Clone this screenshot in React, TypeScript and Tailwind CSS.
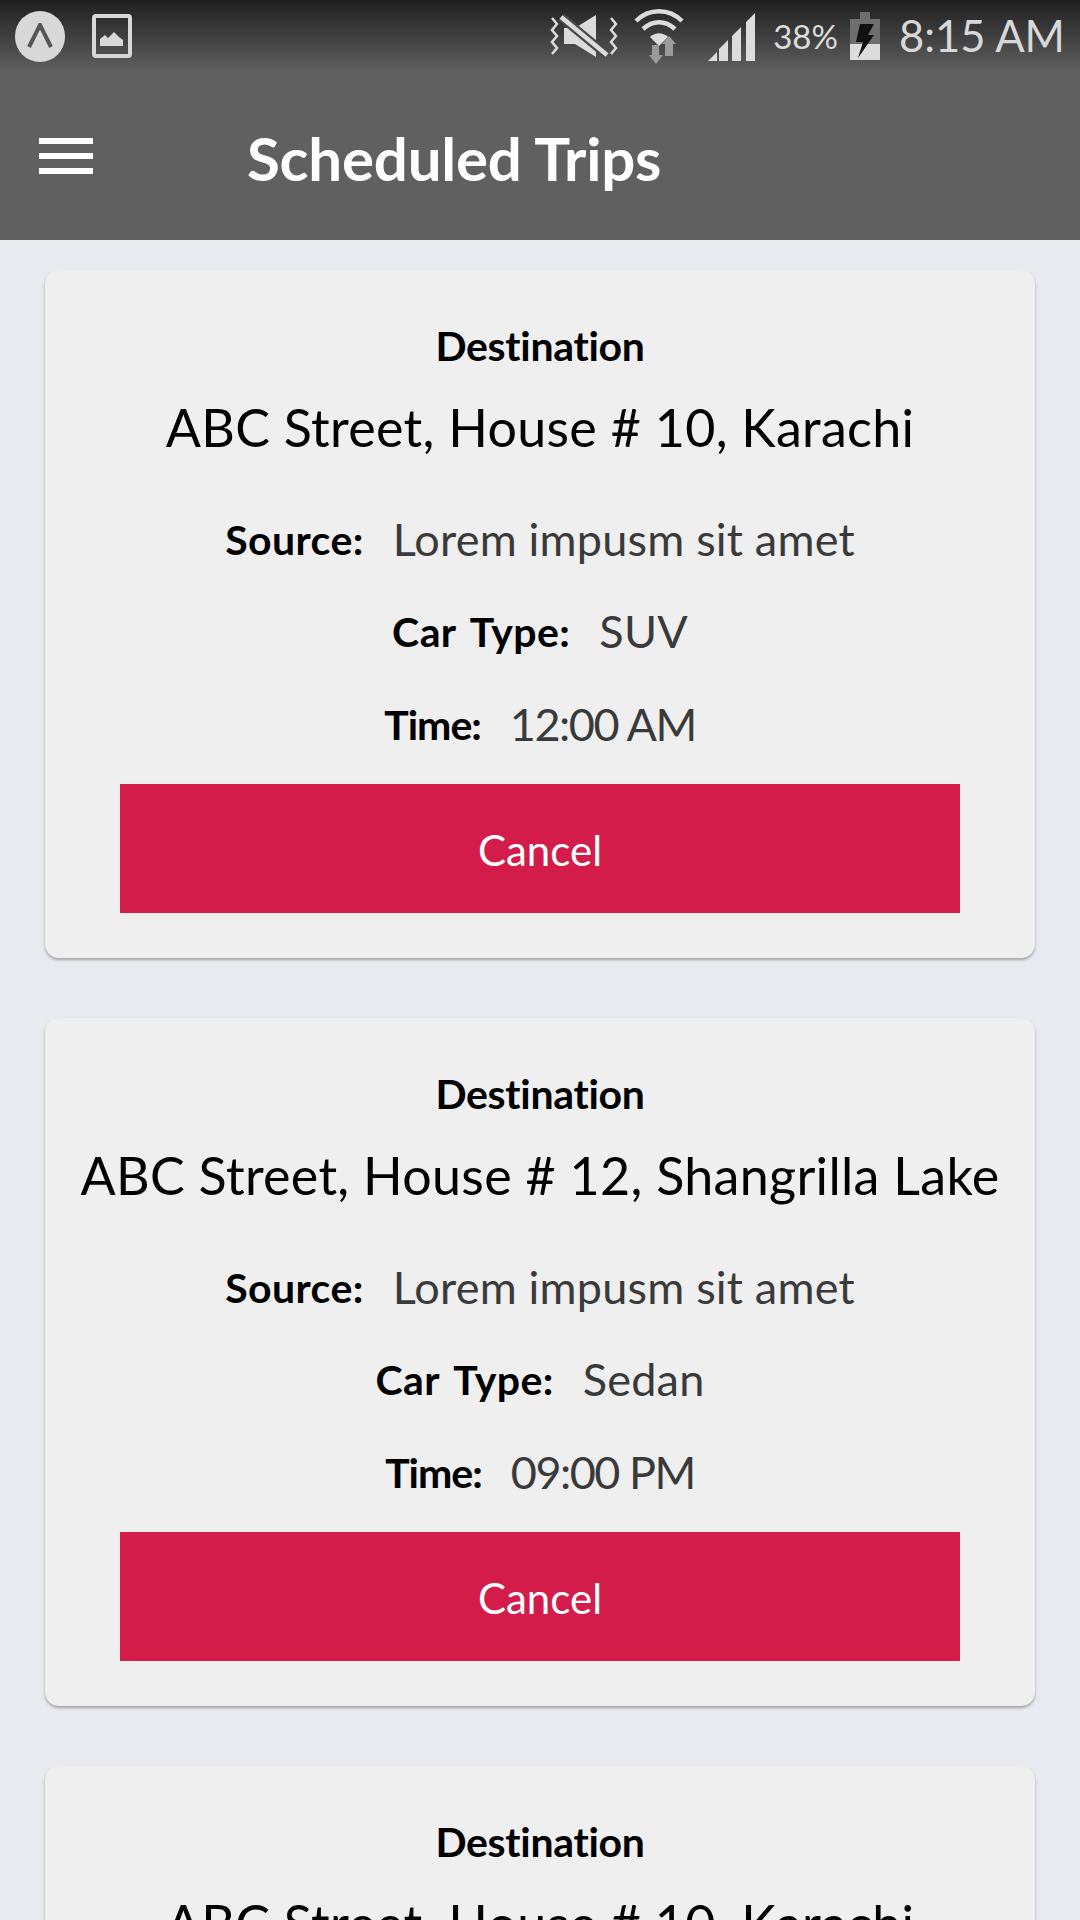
const trips = [
  { address: "ABC Street, House # 10, Karachi", car: "SUV", time: "12:00 AM" },
  { address: "ABC Street, House # 12, Shangrilla Lake", car: "Sedan", time: "09:00 PM" },
  { address: "ABC Street, House # 10, Karachi", car: "SUV", time: "12:00 AM" },
];

const Row = ({ label, value, labelClass, valueClass }: { label: string; value: string; labelClass: string; valueClass: string }) => (
  <div className="flex h-[92.5px] items-center justify-center gap-[29px]">
    <span className={`text-[41px] font-bold [word-spacing:5px] text-black ${labelClass}`}>{label}</span>
    <span className={`text-[45px] text-[#3a3a3a] ${valueClass}`}>{value}</span>
  </div>
);

const StatusIcons = () => (
  <div className="flex items-center">
    {/* vibrate */}
    <svg width="70" height="50" viewBox="0 0 70 50" className="text-[#dcdcdc]">
      <path d="M26 17l21-13v42L26 33H15V17z" fill="currentColor" />
      <path d="M12 6l46 38" stroke="#4a4a4a" strokeWidth="9" />
      <path d="M12 6l46 38" stroke="currentColor" strokeWidth="4.5" />
      <path d="M3 7l5 6-5 6 5 6-5 6 5 6-5 6" fill="none" stroke="currentColor" strokeWidth="2.5" />
      <path d="M62 7l5 6-5 6 5 6-5 6 5 6-5 6" fill="none" stroke="currentColor" strokeWidth="2.5" />
    </svg>
    {/* wifi */}
    <svg width="50" height="56" viewBox="0 0 50 56" className="ml-[15px] text-[#dcdcdc]">
      <path d="M2 13C15 0 35 0 48 13" fill="none" stroke="currentColor" strokeWidth="4.5" />
      <path d="M9 21c10-9 22-9 32 0" fill="none" stroke="currentColor" strokeWidth="4.5" />
      <path d="M16 29c6-5 12-5 18 0l-9 9z" fill="currentColor" />
      <path d="M18 37h7v10h4l-7 9-7-9h3z M28 36l7-8 7 8h-3v12h-8V36z" fill="#9a9a9a" />
    </svg>
    {/* signal */}
    <svg width="48" height="50" viewBox="0 0 48 50" className="ml-[24px] text-[#dcdcdc]">
      <path d="M0 50l9-9v9z M11 50V38l9-9v21z M24 50V25l9-9v34z M38 50V11l9-9v48z" fill="currentColor" />
    </svg>
    <span className="ml-[17px] text-[33px] leading-none text-[#dcdcdc]">38%</span>
    {/* battery */}
    <svg width="30" height="48" viewBox="0 0 30 48" className="ml-[12px]">
      <rect x="10" y="0" width="10" height="7" fill="#6e6e6e" />
      <rect x="0" y="7" width="30" height="25" fill="#6e6e6e" />
      <rect x="0" y="32" width="30" height="16" fill="#dcdcdc" />
      <path d="M10 12h14l-6 11h6L8 46l5-16H6z" fill="#111" />
    </svg>
    <span className="ml-[19px] text-[43.5px] leading-none text-[#d8d8d8]">8:15 AM</span>
  </div>
);

const Card = ({ address, car, time }: { address: string; car: string; time: string }) => (
  <div className="mx-[45px] mb-[60px] rounded-[14px] bg-[#efeff0] pt-[53px] pb-[45px] shadow-[0_2px_3px_rgba(0,0,0,0.3)]">
    <div className="text-center text-[41px] leading-[46px] font-bold tracking-[-0.3px] text-black">Destination</div>
    <div className="mt-[26px] mb-[34px] text-center text-[52px] leading-[64px] tracking-[0.3px] whitespace-nowrap text-black">{address}</div>
    <Row label="Source:" value="Lorem impusm sit amet" labelClass="tracking-[0.4px]" valueClass="tracking-[0.2px]" />
    <Row label="Car Type:" value={car} labelClass="tracking-[0.4px]" valueClass="tracking-[0.2px]" />
    <Row label="Time:" value={time} labelClass="tracking-[-1px]" valueClass="tracking-[-1.5px]" />
    <button className="mx-auto mt-[13.5px] flex h-[129px] w-[840px] items-center justify-center bg-[#d31c4a] pt-[4px] text-[42px] text-white">
      Cancel
    </button>
  </div>
);

export default function App() {
  return (
    <div className="h-[1920px] w-[1080px] overflow-hidden bg-[#e9eaef] font-['Lato',sans-serif]">
      <header className="h-[240px] bg-[#606060]">
        <div className="flex h-[72px] items-center justify-between bg-gradient-to-b from-[#202020] to-[#606060] pr-[15px] pl-[15px]">
          <div className="flex items-center gap-[27px]">
            <div className="flex h-[51px] w-[50px] items-center justify-center rounded-full bg-[#d8d8d8]">
              <svg width="26" height="26" viewBox="0 0 26 26">
                <path d="M2 24L13 2l11 22" fill="none" stroke="#555" strokeWidth="4" />
              </svg>
            </div>
            <svg width="40" height="44" viewBox="0 0 40 44">
              <rect x="2" y="2" width="36" height="40" rx="2" fill="none" stroke="#d8d8d8" strokeWidth="4" />
              <path d="M8 32v-7l5-4 3 3 6-6 5 5 4 3v6z" fill="#d8d8d8" />
            </svg>
          </div>
          <StatusIcons />
        </div>
        <div className="flex h-[168px] items-start pt-[63px] pl-[39px]">
          <div className="mt-[3px] flex h-[36px] w-[54px] flex-col justify-between">
            <div className="h-[6px] bg-white" />
            <div className="h-[6px] bg-white" />
            <div className="h-[6px] bg-white" />
          </div>
          <h1 className="-mt-[13px] ml-[154px] text-[60px] leading-[72px] font-bold tracking-[-0.2px] text-white">Scheduled Trips</h1>
        </div>
      </header>
      <main className="pt-[30px]">
        {trips.map((t, i) => (
          <Card key={i} {...t} />
        ))}
      </main>
    </div>
  );
}
